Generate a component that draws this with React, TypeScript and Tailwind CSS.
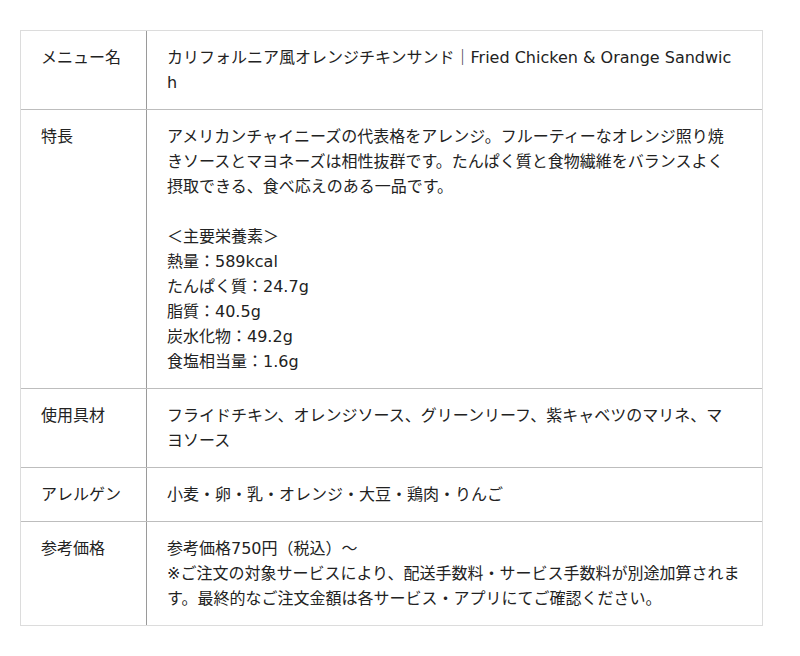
import React from "react";

const rows: { label: string; lines: string[] }[] = [
  {
    label: "メニュー名",
    lines: ["カリフォルニア風オレンジチキンサンド｜Fried Chicken & Orange Sandwic", "h"],
  },
  {
    label: "特長",
    lines: [
      "アメリカンチャイニーズの代表格をアレンジ。フルーティーなオレンジ照り焼",
      "きソースとマヨネーズは相性抜群です。たんぱく質と食物繊維をバランスよく",
      "摂取できる、食べ応えのある一品です。",
      "",
      "＜主要栄養素＞",
      "熱量：589kcal",
      "たんぱく質：24.7g",
      "脂質：40.5g",
      "炭水化物：49.2g",
      "食塩相当量：1.6g",
    ],
  },
  {
    label: "使用具材",
    lines: ["フライドチキン、オレンジソース、グリーンリーフ、紫キャベツのマリネ、マ", "ヨソース"],
  },
  {
    label: "アレルゲン",
    lines: ["小麦・卵・乳・オレンジ・大豆・鶏肉・りんご"],
  },
  {
    label: "参考価格",
    lines: [
      "参考価格750円（税込）～",
      "※ご注文の対象サービスにより、配送手数料・サービス手数料が別途加算されま",
      "す。最終的なご注文金額は各サービス・アプリにてご確認ください。",
    ],
  },
];

export default function App() {
  return (
    <div
      className="bg-white w-[800px] h-[656px] pt-[30px] pl-[20px] text-[#222] text-[16px] leading-[25px]"
      style={{ fontFamily: '"DejaVu Sans", "Noto Sans CJK JP", sans-serif' }}
    >
      <div className="w-[743px] border border-[#dcdcdc]">
        {rows.map((r, i) => (
          <div
            key={i}
            className={
              i === 0
                ? "grid grid-cols-[125px_1fr]"
                : "grid grid-cols-[125px_1fr] border-t border-[#bdbdbd]"
            }
          >
            <div className="px-[20px] py-[14px]">{r.label}</div>
            <div className="border-l border-[#9a9a9a] pl-[20px] pr-[20px] py-[14px]">
              {r.lines.map((l, j) => (
                <div key={j} className="min-h-[25px] whitespace-nowrap">
                  {l}
                </div>
              ))}
            </div>
          </div>
        ))}
      </div>
    </div>
  );
}
